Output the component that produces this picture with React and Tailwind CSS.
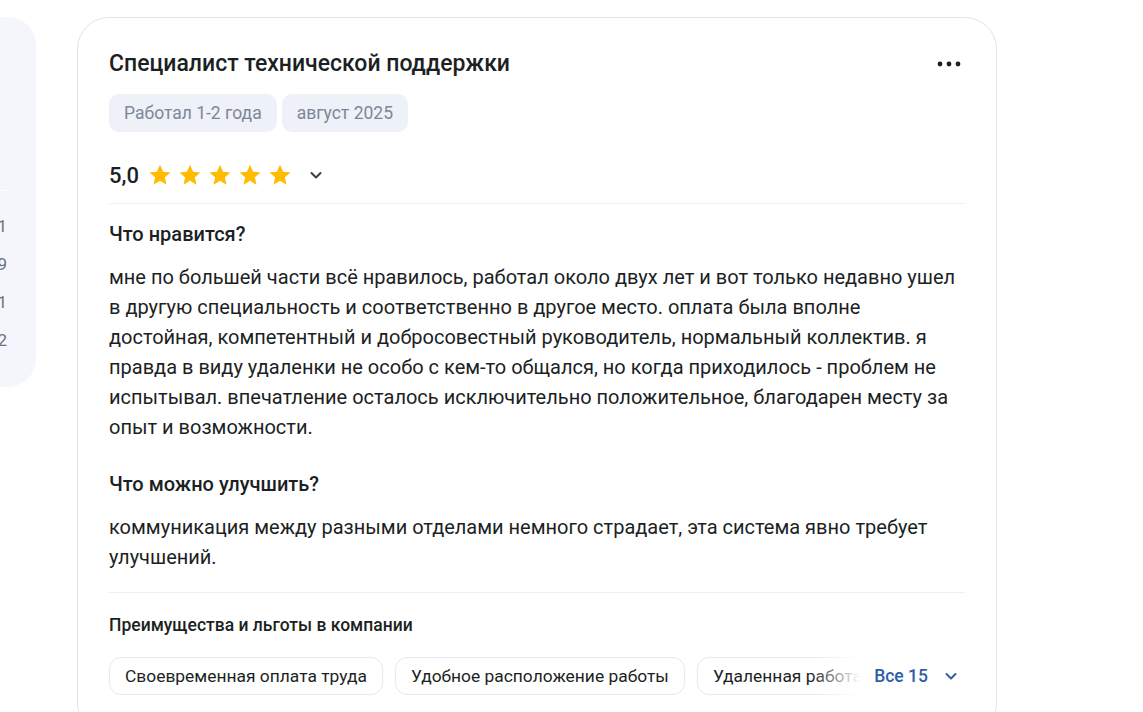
import React from 'react';

const bodyLiked = [
  'мне по большей части всё нравилось, работал около двух лет и вот только недавно ушел',
  'в другую специальность и соответственно в другое место. оплата была вполне',
  'достойная, компетентный и добросовестный руководитель, нормальный коллектив. я',
  'правда в виду удаленки не особо с кем-то общался, но когда приходилось - проблем не',
  'испытывал. впечатление осталось исключительно положительное, благодарен месту за',
  'опыт и возможности.',
];

const bodyImprove = [
  'коммуникация между разными отделами немного страдает, эта система явно требует',
  'улучшений.',
];

const perks = ['Своевременная оплата труда', 'Удобное расположение работы', 'Удаленная работа', 'Гибкий график'];

const Star = () => (
  <svg width="24" height="24" viewBox="0 0 24 24">
    <path
      d="M12 1.8l3.05 6.9 7.45.7-5.65 4.95 1.7 7.35L12 17.85 5.45 21.7l1.7-7.35L1.5 9.4l7.45-.7z"
      fill="#ffbb00"
    />
  </svg>
);

const Chevron = ({ color = '#3a3f47', size = 16 }) => (
  <svg width={size} height={size} viewBox="0 0 16 16" fill="none">
    <path d="M3.5 6l4.5 4.5L12.5 6" stroke={color} strokeWidth="2" strokeLinecap="round" strokeLinejoin="round" />
  </svg>
);

const SidePanel = () => (
  <div className="-ml-[200px] w-[236px] h-[370px] mt-[17px] shrink-0 bg-[#f4f6fb] rounded-[28px] pt-[173px] pr-[29px] text-[17px] text-[#6b7280]">
    <div className="h-px bg-white" />
    <div className="mt-[17px]">
      {['4,1', '3,9', '4,1', '4,2'].map((v, i) => (
        <div key={i} className="h-[38px] flex items-center justify-end">{v}</div>
      ))}
    </div>
  </div>
);

const App = () => {
  return (
    <div className="h-[712px] overflow-hidden bg-white flex gap-[41px] text-[#1c1f24]" style={{ fontFamily: 'Roboto, "Noto Sans", sans-serif' }}>
      <SidePanel />
      <div className="w-[920px] shrink-0 mt-[17px] border border-[#dde3ec] rounded-[32px] px-[31px] pt-8 pb-10 self-start">
        <div className="flex items-center justify-between">
          <h2 className="text-[23px] leading-[28px] font-medium">Специалист технической поддержки</h2>
          <svg width="26" height="8" viewBox="0 0 26 8" className="mr-[2px]">
            <circle cx="3" cy="4" r="2.4" fill="#1c1f24" />
            <circle cx="12" cy="4" r="2.4" fill="#1c1f24" />
            <circle cx="21" cy="4" r="2.4" fill="#1c1f24" />
          </svg>
        </div>

        <div className="flex gap-[5px] mt-4">
          <span className="h-[38px] px-[15px] flex items-center rounded-[10px] bg-[#eef1f7] text-[17.5px] text-[#7d8799]">Работал 1-2 года</span>
          <span className="h-[38px] px-[15px] flex items-center rounded-[10px] bg-[#eef1f7] text-[17.5px] text-[#7d8799]">август 2025</span>
        </div>

        <div className="flex items-center h-[32px] mt-[27px]">
          <span className="text-[22px] font-medium">5,0</span>
          <div className="flex gap-[6px] ml-[9px]">
            {[0, 1, 2, 3, 4].map((i) => <Star key={i} />)}
          </div>
          <span className="ml-[16px]"><Chevron /></span>
        </div>

        <div className="h-px bg-[#eceff4] mt-3" />

        <h3 className="mt-[18px] text-[20px] leading-[24px] font-medium">Что нравится?</h3>
        <p className="mt-4 text-[20px] leading-[30px]">
          {bodyLiked.map((l, i) => <span key={i} className="block whitespace-nowrap">{l}</span>)}
        </p>

        <h3 className="mt-[30px] text-[20px] leading-[24px] font-medium">Что можно улучшить?</h3>
        <p className="mt-4 text-[20px] leading-[30px]">
          {bodyImprove.map((l, i) => <span key={i} className="block whitespace-nowrap">{l}</span>)}
        </p>

        <div className="h-px bg-[#eceff4] mt-5" />

        <h4 className="mt-[21px] text-[17.5px] leading-[22px] font-medium">Преимущества и льготы в компании</h4>

        <div className="flex items-center mt-[21px]">
          <div className="relative flex-1 overflow-hidden">
            <div className="flex gap-[12px]">
              {perks.map((p) => (
                <span key={p} className="h-[38px] px-[15px] flex items-center shrink-0 whitespace-nowrap rounded-[12px] border border-[#e4e8ef] text-[17.4px]">{p}</span>
              ))}
            </div>
            <div className="absolute right-0 top-0 h-full w-[50px] bg-gradient-to-r from-transparent to-white" />
          </div>
          <button className="flex items-center ml-[14px] text-[17.5px] font-medium text-[#2f5ea8]">
            Все 15
            <span className="ml-[15px] mr-[6px]"><Chevron color="#2f5ea8" /></span>
          </button>
        </div>
      </div>
    </div>
  );
};

export default App;
